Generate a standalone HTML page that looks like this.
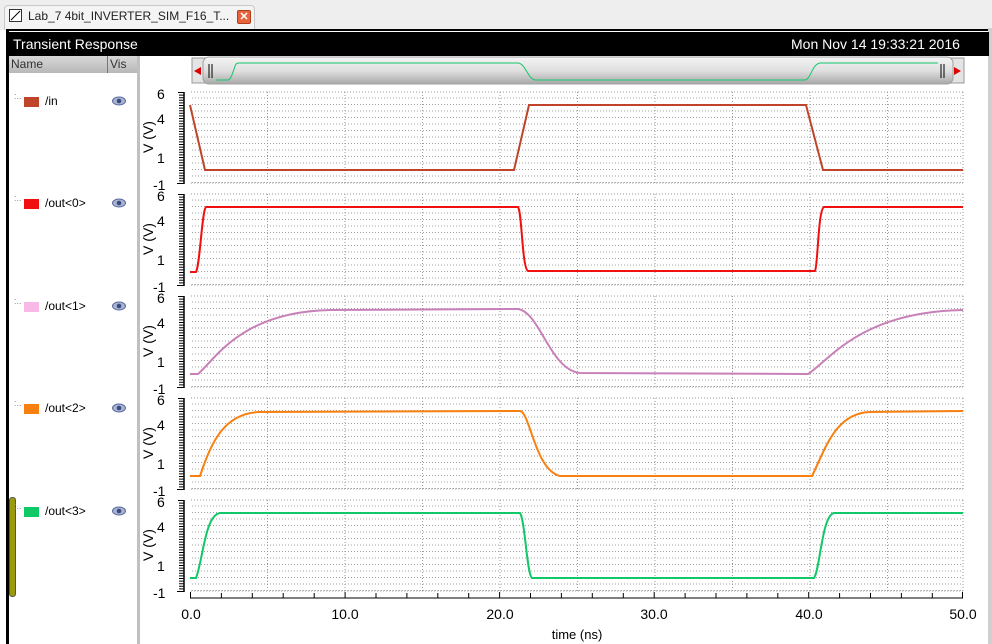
<!DOCTYPE html>
<html><head><meta charset="utf-8"><style>
*{margin:0;padding:0;box-sizing:border-box}
body{width:992px;height:644px;background:#fff;position:relative;overflow:hidden;font-family:"Liberation Sans",sans-serif;}
.abs{position:absolute}
.t{position:absolute;font-size:12px;color:#000;white-space:nowrap}
</style></head><body>
<div class="abs" style="left:0;top:0;width:992px;height:30px;background:#eeeeee"></div>
<div class="abs" style="left:4px;top:5px;width:251px;height:25px;background:#f4f4f4;border:1px solid #c8c8c8;border-bottom:none;border-radius:4px 4px 0 0"></div>
<div class="abs" style="left:9px;top:9px;width:13px;height:13px;border:1px solid #333;background:#fff"><svg width="11" height="11" style="position:absolute;left:0;top:0"><line x1="1" y1="10" x2="10" y2="1" stroke="#000"/></svg></div>
<div class="t" style="left:28px;top:9px;font-size:12px;color:#222">Lab_7 4bit_INVERTER_SIM_F16_T...</div>
<div class="abs" style="left:237px;top:10px;width:14px;height:14px;background:#e8643c;border:1px solid #b04020;border-radius:2px;color:#fff;font-size:11px;font-weight:bold;line-height:12px;text-align:center">✕</div>
<div class="abs" style="left:6px;top:29px;width:986px;height:615px;border-left:3px solid #000;border-top:2px solid #000;background:#fff"></div>
<div class="abs" style="left:988px;top:28px;width:4px;height:616px;background:#d0d0d0"></div>
<div class="abs" style="left:8px;top:32px;width:981px;height:24px;background:#000"></div>
<div class="t" style="left:13px;top:36px;color:#fff;font-size:14px">Transient Response</div>
<div class="t" style="left:791px;top:36px;color:#fff;font-size:14px">Mon Nov 14 19:33:21 2016</div>
<div class="abs" style="left:9px;top:56px;width:130px;height:17px;background:linear-gradient(#d8d8d8,#b8b8b8)"></div>
<div class="abs" style="left:107px;top:56px;width:1px;height:17px;background:#777"></div>
<div class="t" style="left:11px;top:57px;color:#333">Name</div>
<div class="t" style="left:110px;top:57px;color:#333">Vis</div>
<div class="abs" style="left:137px;top:56px;width:3px;height:588px;background:#c0c0c0"></div>
<div class="abs" style="left:9px;top:497px;width:7px;height:100px;background:#9a9a10;border:1px solid #555;border-radius:3px"></div>

<div class="t" style="left:14px;top:91px;color:#888;font-size:9px">:..</div>
<div class="abs" style="left:24px;top:97px;width:15px;height:10px;background:#c0442c"></div>
<div class="t" style="left:45px;top:94px">/in</div>
<div class="t" style="left:14px;top:193px;color:#888;font-size:9px">:..</div>
<div class="abs" style="left:24px;top:199px;width:15px;height:10px;background:#f01010"></div>
<div class="t" style="left:45px;top:196px">/out&lt;0&gt;</div>
<div class="t" style="left:14px;top:296px;color:#888;font-size:9px">:..</div>
<div class="abs" style="left:24px;top:302px;width:15px;height:10px;background:#f8b8e8"></div>
<div class="t" style="left:45px;top:299px">/out&lt;1&gt;</div>
<div class="t" style="left:14px;top:398px;color:#888;font-size:9px">:..</div>
<div class="abs" style="left:24px;top:404px;width:15px;height:10px;background:#f88010"></div>
<div class="t" style="left:45px;top:401px">/out&lt;2&gt;</div>
<div class="t" style="left:14px;top:501px;color:#888;font-size:9px">:..</div>
<div class="abs" style="left:24px;top:507px;width:15px;height:10px;background:#10c868"></div>
<div class="t" style="left:45px;top:504px">/out&lt;3&gt;</div>

<svg class="abs" style="left:0;top:0" width="992" height="644">
<defs>
<g id="eye"><ellipse cx="0" cy="0" rx="6.5" ry="4" fill="#a8b4d0" stroke="#5868a0" stroke-width="1"/><circle cx="0" cy="0" r="2.3" fill="#3a4a80"/></g>
<pattern id="hg" width="3" height="6.5" patternUnits="userSpaceOnUse"><rect x="0" y="0" width="1" height="1" fill="#a0a0a0"/></pattern>
<linearGradient id="sb" x1="0" y1="0" x2="0" y2="1"><stop offset="0" stop-color="#f4f4f4"/><stop offset="0.5" stop-color="#e0e0e0"/><stop offset="1" stop-color="#a8a8a8"/></linearGradient>
</defs>
<use href="#eye" x="119" y="101"/><use href="#eye" x="119" y="203"/><use href="#eye" x="119" y="306"/><use href="#eye" x="119" y="408"/><use href="#eye" x="119" y="511"/>
<rect x="192" y="58" width="15" height="25" fill="#e4e4e4" stroke="#999"/>
<path d="M194 71 L201 67 L201 75 Z" fill="#d00"/>
<rect x="949" y="58" width="15" height="25" fill="#e4e4e4" stroke="#999"/>
<path d="M961 71 L954 67 L954 75 Z" fill="#d00"/>
<rect x="203" y="57" width="750" height="27" rx="6" fill="url(#sb)" stroke="#a0a0a0"/>
<line x1="209" y1="64" x2="209" y2="78" stroke="#000"/><line x1="212" y1="64" x2="212" y2="78" stroke="#000"/>
<line x1="941" y1="64" x2="941" y2="78" stroke="#000"/><line x1="944" y1="64" x2="944" y2="78" stroke="#000"/>
<path d="M216 80 L228 80 C232 79,233 70,236 64 L238 63 L518 63 C525 63,528 79,535 80 L805 80 C811 79,812 64,820 63 L938 63" fill="none" stroke="#10c868" stroke-width="1"/>
<g font-family="Liberation Sans" font-size="14" fill="#000">
<g id="p0">
<rect x="191" y="92" width="772" height="91" fill="url(#hg)"/>
<g stroke="#999" stroke-dasharray="1 2"><line x1="267.5" y1="92" x2="267.5" y2="183"/><line x1="345" y1="92" x2="345" y2="183"/><line x1="422.5" y1="92" x2="422.5" y2="183"/><line x1="500" y1="92" x2="500" y2="183"/><line x1="577.5" y1="92" x2="577.5" y2="183"/><line x1="655" y1="92" x2="655" y2="183"/><line x1="732.5" y1="92" x2="732.5" y2="183"/><line x1="810" y1="92" x2="810" y2="183"/><line x1="887.5" y1="92" x2="887.5" y2="183"/><line x1="963" y1="92" x2="963" y2="183"/><line x1="191" y1="92" x2="963" y2="92"/><line x1="191" y1="183" x2="963" y2="183"/></g>
<line x1="184" y1="92" x2="184" y2="184" stroke="#000" stroke-width="1.5"/>
<g stroke="#000"><path d="M178 92.5H184M179 95.1H184M179 97.7H184M179 100.3H184M179 102.9H184M179 105.5H184M179 108.1H184M179 110.7H184M179 113.3H184M179 115.9H184M179 118.5H184M179 121.1H184M179 123.7H184M179 126.3H184M179 128.9H184M179 131.5H184M179 134.1H184M179 136.7H184M179 139.3H184M179 141.9H184M179 144.5H184M179 147.1H184M179 149.7H184M179 152.3H184M179 154.9H184M179 157.5H184M179 160.1H184M179 162.7H184M179 165.3H184M179 167.9H184M179 170.5H184M179 173.1H184M179 175.7H184M179 178.3H184M179 180.9H184M177 183.5H184"/></g>
<text x="157" y="99">6</text><text x="157" y="124">4</text><text x="157" y="163">1</text><text x="153" y="190">-1</text>
<text transform="translate(153,137) rotate(-90)" text-anchor="middle">V (V)</text>
</g>
<use href="#p0" y="102"/><use href="#p0" y="204"/><use href="#p0" y="306"/><use href="#p0" y="408"/>
</g>
<g fill="none" stroke-width="2">
<path d="M190 105 L205 170 L514 170 L529 105 L806 105 L823 170 L963 170" stroke="#c0442c"/>
<path d="M190 272 L196 272 C200 265,202 210,206 207 L518 207 C522 212,522 268,528 271 L815 271 C818 265,818 210,824 207 L963 207" stroke="#f01010"/>
<path d="M190 374 L198 374 C215 360,240 312,330 310 L518 309 C540 312,550 370,580 373 L808 374 C830 360,860 312,963 310" stroke="#c880b8"/>
<path d="M190 476 L200 476 C212 440,225 413,260 412 L520 411 C530 412,535 470,560 476 L812 476 C825 450,835 413,870 412 L963 411" stroke="#f88010"/>
<path d="M190 578 L196 578 C203 560,205 515,220 513 L520 513 C525 520,527 575,532 578 L814 578 C820 570,822 515,834 513 L963 513" stroke="#10c868"/>
</g>
<line x1="190" y1="598" x2="963" y2="598" stroke="#000"/>
<g stroke="#000"><path d="M190.5 598V592M221.4 598V593M252.3 598V593M283.2 598V593M314.2 598V593M345.1 598V592M376 598V593M406.9 598V593M437.8 598V593M468.7 598V593M499.6 598V592M530.5 598V593M561.4 598V593M592.3 598V593M623.3 598V593M654.2 598V592M685.1 598V593M716 598V593M746.9 598V593M777.8 598V593M808.7 598V592M839.6 598V593M870.5 598V593M901.4 598V593M932.3 598V593M962.5 598V592"/></g>
<g font-family="Liberation Sans" font-size="14" text-anchor="middle">
<text x="191" y="619">0.0</text><text x="345" y="619">10.0</text><text x="500" y="619">20.0</text><text x="654" y="619">30.0</text><text x="809" y="619">40.0</text><text x="963" y="619">50.0</text>
<text x="577" y="639" font-size="13">time (ns)</text>
</g>
</svg>
</body></html>
